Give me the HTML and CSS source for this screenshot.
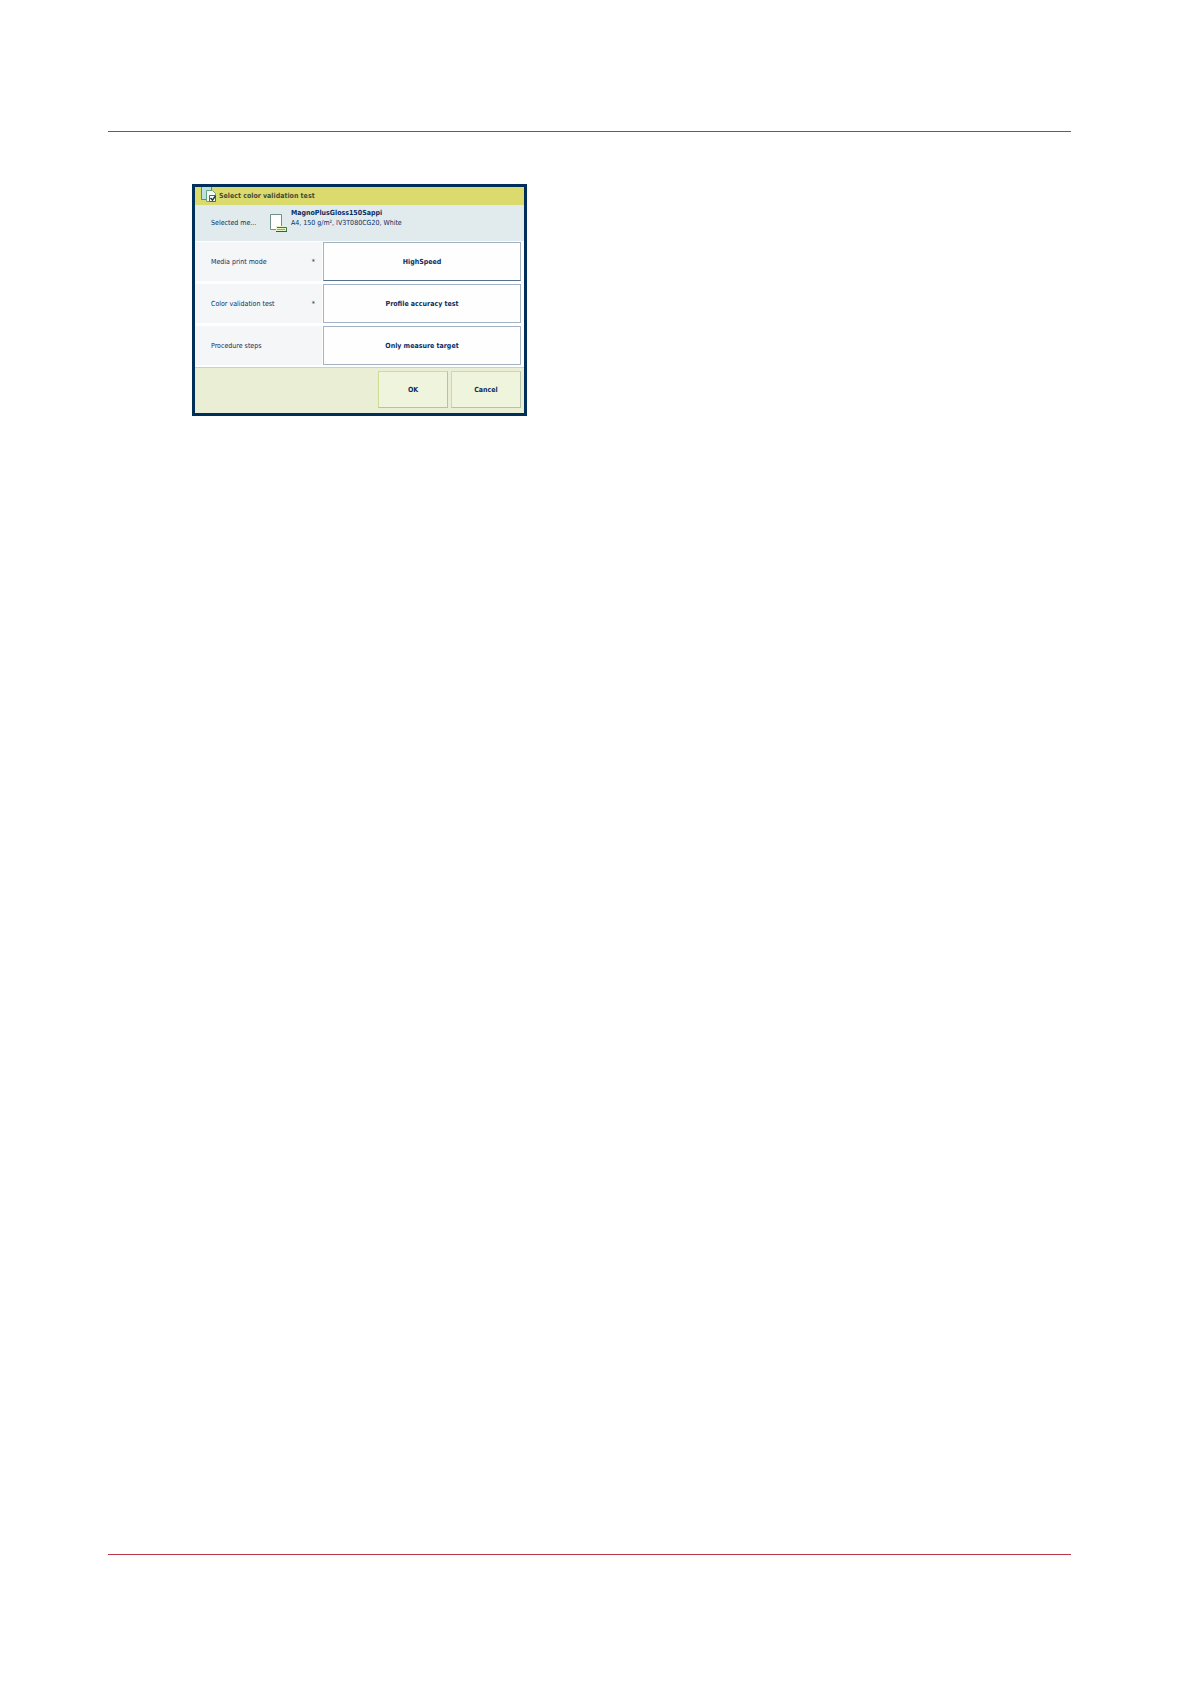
FILE: index.html
```html
<!DOCTYPE html>
<html lang="en">
<head>
  <meta charset="UTF-8">
  <meta name="viewport" content="width=device-width, initial-scale=1.0">
  <title>Select color validation test</title>
  <link rel="stylesheet" href="styles.css">
</head>
<body>
  <main class="page">
    <form class="dialog">
      <h1 class="title">
        <svg class="title-icon" viewBox="0 0 15 16" aria-hidden="true">
          <path d="M.5 0v12.500h5M10.500 0v3" fill="none" stroke="#4c8f86"/>
          <path d="M1 0h9v12H1z" fill="#b9e3e2"/>
          <path d="M5.500 3.500h6l3 3v8h-9z" fill="#f4fbf6" stroke="#6d9f83"/>
          <path d="M8.500 8.500h6v6h-6z" fill="#fff" stroke="#3d7350"/>
          <path d="M9.500 11l2 2 3-4" fill="none" stroke="#173f35" stroke-width="1.500"/>
        </svg>
        <span>Select color validation test</span>
      </h1>

      <div class="media">
        <span class="media-label">Selected me...</span>
        <svg class="media-icon" viewBox="0 0 18 20" aria-hidden="true">
          <path d="M1.500 1.500h11v15h-11z" fill="#fff" stroke="#6f918e"/>
          <path d="M7 13h10v6H7z" fill="#e6f2c9"/>
          <path d="M8 14.500h9.500v4" fill="none" stroke="#347c43"/>
          <path d="M8 16.500h8" stroke="#8fbb3f"/>
          <path d="M7 18.500h11" stroke="#256b3a"/>
        </svg>
        <p class="media-info"><strong>MagnoPlusGloss150Sappi</strong><br>A4, 150 g/m², IV3T080CG20, White</p>
      </div>

      <div class="fields">
        <label class="field-label" for="mode"><span>Media print mode</span><span>*</span></label>
        <button class="value active" type="button" id="mode">HighSpeed</button>
        <label class="field-label" for="test"><span>Color validation test</span><span>*</span></label>
        <button class="value" type="button" id="test">Profile accuracy test</button>
        <label class="field-label" for="steps"><span>Procedure steps</span></label>
        <button class="value" type="button" id="steps">Only measure target</button>
      </div>

      <div class="actions">
        <button class="action" type="button">OK</button>
        <button class="action" type="button">Cancel</button>
      </div>
    </form>
  </main>
</body>
</html>
```

FILE: styles.css
```css
* {
  box-sizing: border-box;
}

body {
  margin: 0;
  min-height: 100vh;
  display: flex;
  padding: 131px 120px 129px 108px;
  background-color: #fff;
  color: #0c2d5e;
  font-family: "DejaVu Sans Condensed", "DejaVu Sans", sans-serif;
  font-size: 7px;
  line-height: 10px;
}

.page {
  flex: 1;
  padding: 52px 84px;
  border-top: 1px solid #b8384a;
  border-bottom: 1px solid #b8384a;
}

.dialog {
  max-width: 335px;
  border: 3px solid #002f59;
  background-color: #fff;
}

.title {
  display: flex;
  gap: 3px;
  height: 18px;
  margin: 0;
  padding-left: 6px;
  background-color: #dadb6c;
  color: #444a38;
  font-size: 7px;
  font-weight: bold;
  line-height: 18px;
}

.title-icon {
  width: 15px;
  height: 16px;
}

.media {
  display: flex;
  height: 36px;
  padding-left: 16px;
  background-color: #e1eaed;
}

.media-label {
  width: 58px;
  padding-top: 13px;
}

.media-icon {
  width: 18px;
  height: 20px;
  margin-top: 8px;
}

.media-info {
  margin: 3px 0 0 4px;
  white-space: nowrap;
}

.fields {
  display: grid;
  grid-template-columns: 127px 1fr;
  grid-auto-rows: 39px;
  gap: 3px 1px;
  padding: 1px 3px 2px 0;
}

.field-label {
  display: flex;
  align-items: center;
  justify-content: space-between;
  padding: 0 7px 0 16px;
  background-color: #f4f6f8;
}

.value,
.action {
  padding: 0;
  border: 1px solid #a3b2c2;
  background-color: #fefefe;
  color: #0c2d5e;
  font: inherit;
  font-weight: bold;
}

.value.active {
  border-bottom-color: #54708c;
}

.actions {
  display: flex;
  justify-content: flex-end;
  gap: 3px;
  padding: 3px 3px 5px;
  border-top: 1px solid #ced6a0;
  background-color: #e9eed5;
}

.action {
  width: 70px;
  height: 37px;
  border-color: #cfdc94 #b3c2ab #b3c2ab #cfdc94;
  background-color: #eff4dc;
}
```
